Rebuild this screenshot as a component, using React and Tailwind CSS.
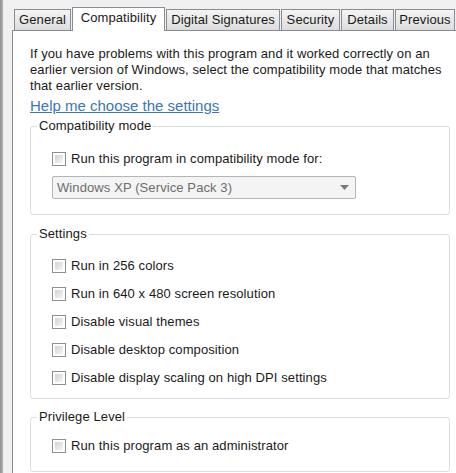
import React from "react";

function Checkbox() {
  return (
    <div className="w-[14px] h-[14px] shrink-0 border border-[#8e8f8f] bg-white p-[2px]">
      <div className="w-full h-full bg-gradient-to-br from-[#d2d2d2] to-[#f6f6f6]" />
    </div>
  );
}

function CheckRow({ label, className = "" }) {
  return (
    <div className={`flex items-center gap-[5px] h-4 ${className}`}>
      <Checkbox />
      <span className="whitespace-nowrap">{label}</span>
    </div>
  );
}

function Group({ title, className = "", children }) {
  return (
    <fieldset className={`w-[420px] border border-[#d5dfe5] rounded-[3px] ${className}`}>
      <legend className="ml-[6px] px-[2px] leading-4">{title}</legend>
      <div className="pl-[21px]">{children}</div>
    </fieldset>
  );
}

function Tab({ label, width, active = false, className = "" }) {
  if (active) {
    return (
      <div
        className={`relative z-10 h-[24px] -mb-px shrink-0 flex items-start justify-center pt-[2px] bg-white border border-b-0 border-[#898c95] ${className}`}
        style={{ width }}
      >
        {label}
      </div>
    );
  }
  return (
    <div
      className={`h-[21px] shrink-0 flex items-center justify-center bg-gradient-to-b from-[#f4f4f4] to-[#dcdcdc] border border-b-0 border-[#898c95] ${className}`}
      style={{ width }}
    >
      {label}
    </div>
  );
}

export default function App() {
  const settings = [
    "Run in 256 colors",
    "Run in 640 x 480 screen resolution",
    "Disable visual themes",
    "Disable desktop composition",
    "Disable display scaling on high DPI settings",
  ];

  return (
    <div className="w-[456px] h-[473px] overflow-hidden flex bg-[#f0f0f0] text-[13px] leading-4 tracking-[0.1px] text-[#1a1a1a] font-[Liberation_Sans,Arial,sans-serif]">
      {/* window frame edge */}
      <div className="w-[3px] shrink-0 bg-gradient-to-r from-[#8f8f8f] to-[#b4b4b4]" />

      <div className="flex-1 flex flex-col min-w-0">
        {/* Tab strip */}
        <div className="h-[30px] shrink-0 flex items-end pl-[11px] whitespace-nowrap">
          <Tab label="General" width={57} />
          <Tab label="Compatibility" width={93} active className="ml-[1px]" />
          <Tab label="Digital Signatures" width={114} className="ml-[1px]" />
          <Tab label="Security" width={59} className="ml-[1px]" />
          <Tab label="Details" width={53} className="ml-[1px]" />
          <Tab label="Previous" width={60} className="ml-[1px]" />
        </div>

        {/* Panel */}
        <div className="flex-1 ml-[9px] bg-white border-l border-t border-[#898c95] pl-[17px] pt-[15px]">
          <p className="w-[420px]">
            If you have problems with this program and it worked correctly on an
            earlier version of Windows, select the compatibility mode that matches
            that earlier version.
          </p>
          <a className="block mt-[3px] text-[15px] leading-[18px] tracking-normal text-[#3b76b6] underline w-max">
            Help me choose the settings
          </a>

          <Group title="Compatibility mode" className="mt-[3px] pb-[15px]">
            <CheckRow label="Run this program in compatibility mode for:" className="mt-[17px]" />
            <div className="mt-[9px] w-[304px] h-[23px] flex items-center justify-between pl-[4px] pr-[6px] bg-[#f4f4f4] border border-[#b2b5b9] rounded-[2px] text-[#6d6d6d]">
              <span>Windows XP (Service Pack 3)</span>
              <svg width="9" height="5" viewBox="0 0 9 5">
                <path d="M0 0 H9 L4.5 5 Z" fill="#7a7a7a" />
              </svg>
            </div>
          </Group>

          <Group title="Settings" className="mt-[11px] pb-[12px]">
            <div className="mt-[16px] flex flex-col gap-[12px]">
              {settings.map((s) => (
                <CheckRow key={s} label={s} />
              ))}
            </div>
          </Group>

          <Group title="Privilege Level" className="mt-[10px] pb-[17px]">
            <CheckRow label="Run this program as an administrator" className="mt-[13px]" />
          </Group>
        </div>
      </div>
    </div>
  );
}
